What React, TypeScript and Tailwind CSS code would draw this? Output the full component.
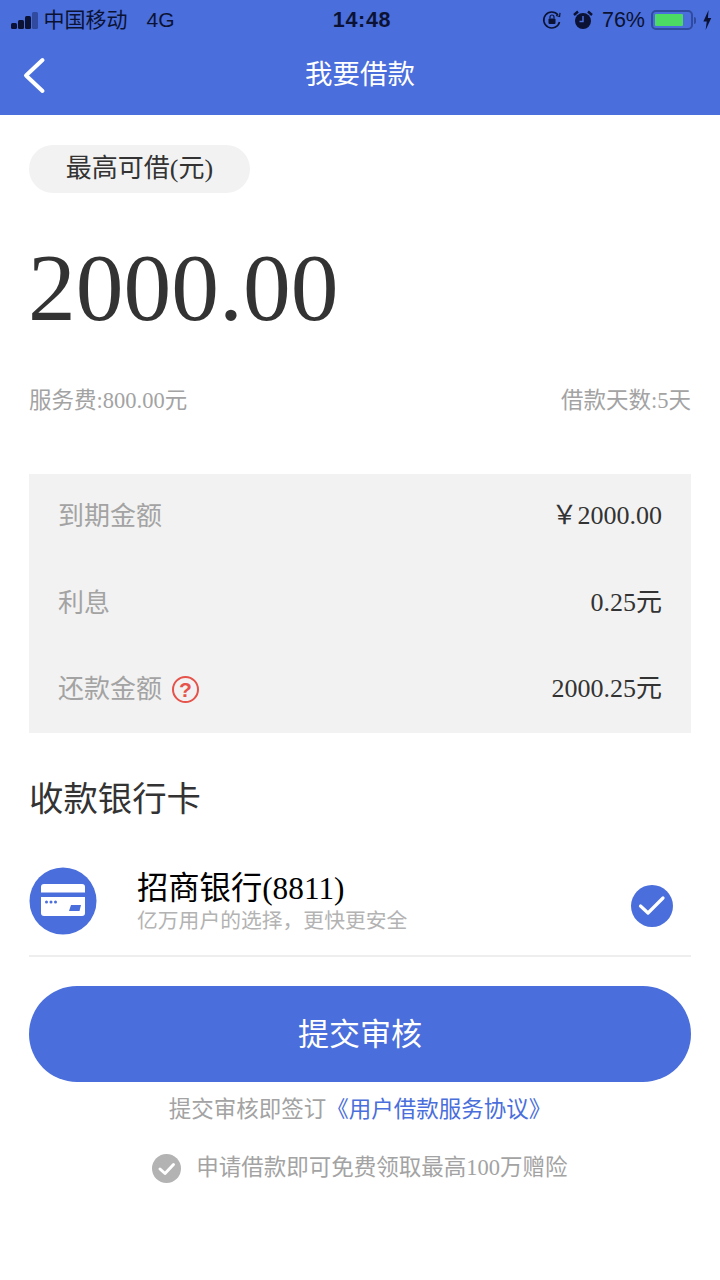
const SERIF = "font-['Liberation_Serif','Noto_Sans_CJK_SC',serif]"
const SANS = "font-['Noto_Sans_CJK_SC',sans-serif]"

function StatusBar() {
  return (
    <div className="flex h-10 items-center justify-between pl-[11px] pr-[8px] font-['Liberation_Sans','Noto_Sans_CJK_SC',sans-serif] text-[#0b1233]">
      <div className="flex w-[240px] items-center">
        <div className="flex items-end gap-[1.5px]">
          <span className="h-[6px] w-[5.5px] rounded-[1.5px] bg-[#0b1233]" />
          <span className="h-[9px] w-[5.5px] rounded-[1.5px] bg-[#0b1233]" />
          <span className="h-[13px] w-[5.5px] rounded-[1.5px] bg-[#0b1233]" />
          <span className="h-[17px] w-[5.5px] rounded-[1.5px] bg-[#2f4a9e]" />
        </div>
        <span className="ml-[6px] text-[21px]">中国移动</span>
        <span className="ml-[19px] text-[21px]">4G</span>
      </div>
      <span className="ml-[1px] text-[21.5px] font-bold tracking-[0.7px]">14:48</span>
      <div className="flex w-[240px] items-center justify-end">
        <svg width="20" height="20" viewBox="0 0 20 20" fill="none" stroke="#0b1233" strokeWidth="1.6">
          <path d="M17.5 12A8 8 0 1 1 16 5" />
          <path d="M14 5.5l3.6 1 .4-3.6" strokeWidth="1.2" />
          <rect x="6.5" y="8.5" width="7" height="5.5" rx="1" fill="#0b1233" stroke="none" />
          <path d="M8 8.5V7a2 2 0 0 1 4 0v1.5" strokeWidth="1.2" />
        </svg>
        <svg className="ml-[11px]" width="20" height="20" viewBox="0 0 20 20">
          <circle cx="10" cy="11" r="8" fill="#0b1233" />
          <path d="M10 6v5.5H6.5" fill="none" stroke="#4a6edb" strokeWidth="1.5" />
          <path d="M1 5l4-3.5M19 5l-4-3.5" stroke="#0b1233" strokeWidth="2.4" />
        </svg>
        <span className="ml-[9px] text-[21.5px]">76%</span>
        <div className="ml-[6px] flex h-[20px] w-[42px] items-center rounded-[5px] border-2 border-[#2f4a9e] p-[2px]">
          <div className="h-full w-[28px] rounded-[1px] bg-[#4cd964]" />
        </div>
        <span className="ml-[1px] h-[7px] w-[2px] rounded-r-[2px] bg-[#2f4a9e]" />
        <svg className="ml-[7px]" width="9" height="20" viewBox="0 0 12 20" preserveAspectRatio="none">
          <path d="M7.5 0L0.5 11.5H5L3.5 20 11 8H6.5z" fill="#0b1233" />
        </svg>
      </div>
    </div>
  )
}

function InfoRow({ label, value, help }: { label: string; value: string; help?: boolean }) {
  return (
    <div className="flex items-center justify-between">
      <div className="-mt-[4px] flex items-center">
        <span className={`text-[26px] text-[#a3a3a3] ${SANS}`}>{label}</span>
        {help && (
          <span className="ml-[10px] mt-[6px] flex h-[27px] w-[27px] items-center justify-center rounded-full border-2 border-[#e5534b] font-['Liberation_Sans',sans-serif] text-[21px] font-bold text-[#e5534b]">
            ?
          </span>
        )}
      </div>
      <span className={`text-[26px] text-[#333] ${SERIF}`}>{value}</span>
    </div>
  )
}

export default function App() {
  return (
    <div className="h-[1280px] w-[720px] overflow-hidden bg-white">
      <div className="h-[115px] bg-[#4a6edb]">
        <StatusBar />
        <div className="relative flex h-[75px] items-center justify-center pb-[9px]">
          <svg className="absolute left-[22px] top-[17px]" width="24" height="38" viewBox="0 0 24 38">
            <path d="M20.5 3L4 18.5 20.5 34" fill="none" stroke="#fff" strokeWidth="4" strokeLinecap="round" strokeLinejoin="round" />
          </svg>
          <span className={`text-[27.5px] text-white ${SANS}`}>我要借款</span>
        </div>
      </div>

      <div className="px-[29px]">
        <div className={`mt-[30px] flex h-[48px] w-[221px] items-center justify-center rounded-full bg-[#f2f2f2] pb-[2px] text-[26px] text-[#333] ${SERIF}`}>
          最高可借(元)
        </div>
        <div className={`-ml-[1px] mt-[40px] h-[110px] text-[95.5px] leading-[110px] text-[#333] ${SERIF}`}>2000.00</div>
        <div className={`mt-[40px] flex items-center justify-between text-[22.5px] leading-[36px] text-[#a3a3a3] ${SERIF}`}>
          <span>服务费:800.00元</span>
          <span>借款天数:5天</span>
        </div>

        <div className="mt-[55px] flex h-[259px] flex-col justify-between bg-[#f2f2f2] px-[29px] pb-[25px] pt-[22px]">
          <InfoRow label="到期金额" value="￥2000.00" />
          <InfoRow label="利息" value="0.25元" />
          <InfoRow label="还款金额" value="2000.25元" help />
        </div>

        <div className={`mt-[37px] text-[34.4px] leading-[52px] text-[#333] ${SANS}`}>收款银行卡</div>

        <div className="mt-[45px] flex h-[90px] items-start justify-between border-b-2 border-[#eeeeee]">
          <div className="flex items-start">
            <svg width="68" height="68" viewBox="0 0 68 68">
              <circle cx="34" cy="34" r="33.5" fill="#4a6edb" />
              <path d="M12 20a3 3 0 0 1 3-3h38a3 3 0 0 1 3 3v5.500H12z" fill="#fff" />
              <path d="M12 30h44v16a3 3 0 0 1-3 3H15a3 3 0 0 1-3-3z" fill="#fff" />
              <circle cx="17.500" cy="35" r="1.500" fill="#4a6edb" />
              <circle cx="22" cy="35" r="1.500" fill="#4a6edb" />
              <circle cx="26.500" cy="35" r="1.500" fill="#4a6edb" />
              <path d="M42 38h10l-1.500 6H40z" fill="#4a6edb" />
            </svg>
            <div className="ml-[40px] mt-[5px] flex flex-col">
              <span className={`text-[31.3px] leading-[34px] text-black ${SERIF}`}>招商银行(8811)</span>
              <span className={`text-[20.8px] leading-[26px] text-[#b3b3b3] ${SANS}`}>亿万用户的选择，更快更安全</span>
            </div>
          </div>
          <svg className="mr-[18px] mt-[18px]" width="42" height="42" viewBox="0 0 42 42">
            <circle cx="21" cy="21" r="21" fill="#4a6edb" />
            <path d="M9.500 21l7.500 7 15-15" fill="none" stroke="#fff" strokeWidth="3.2" strokeLinecap="round" strokeLinejoin="round" />
          </svg>
        </div>

        <div className={`mt-[29px] flex h-[96px] items-center justify-center rounded-full bg-[#4a6edb] pb-[4px] text-[31px] text-white ${SANS}`}>
          提交审核
        </div>

        <div className={`mt-[8px] text-center text-[22.5px] leading-[34px] ${SANS}`}>
          <span className="text-[#a3a3a3]">提交审核即签订</span>
          <span className="text-[#4a6edb]">《用户借款服务协议》</span>
        </div>

        <div className="mt-[27px] flex items-center justify-center">
          <svg width="29" height="29" viewBox="0 0 29 29">
            <circle cx="14.5" cy="14.5" r="14.5" fill="#b3b3b3" />
            <path d="M8 15l5 4.5 8.5-9" fill="none" stroke="#fff" strokeWidth="3" strokeLinecap="round" strokeLinejoin="round" />
          </svg>
          <span className={`ml-[15px] text-[22.5px] leading-[34px] text-[#a3a3a3] ${SERIF}`}>申请借款即可免费领取最高100万赠险</span>
        </div>
      </div>
    </div>
  )
}
